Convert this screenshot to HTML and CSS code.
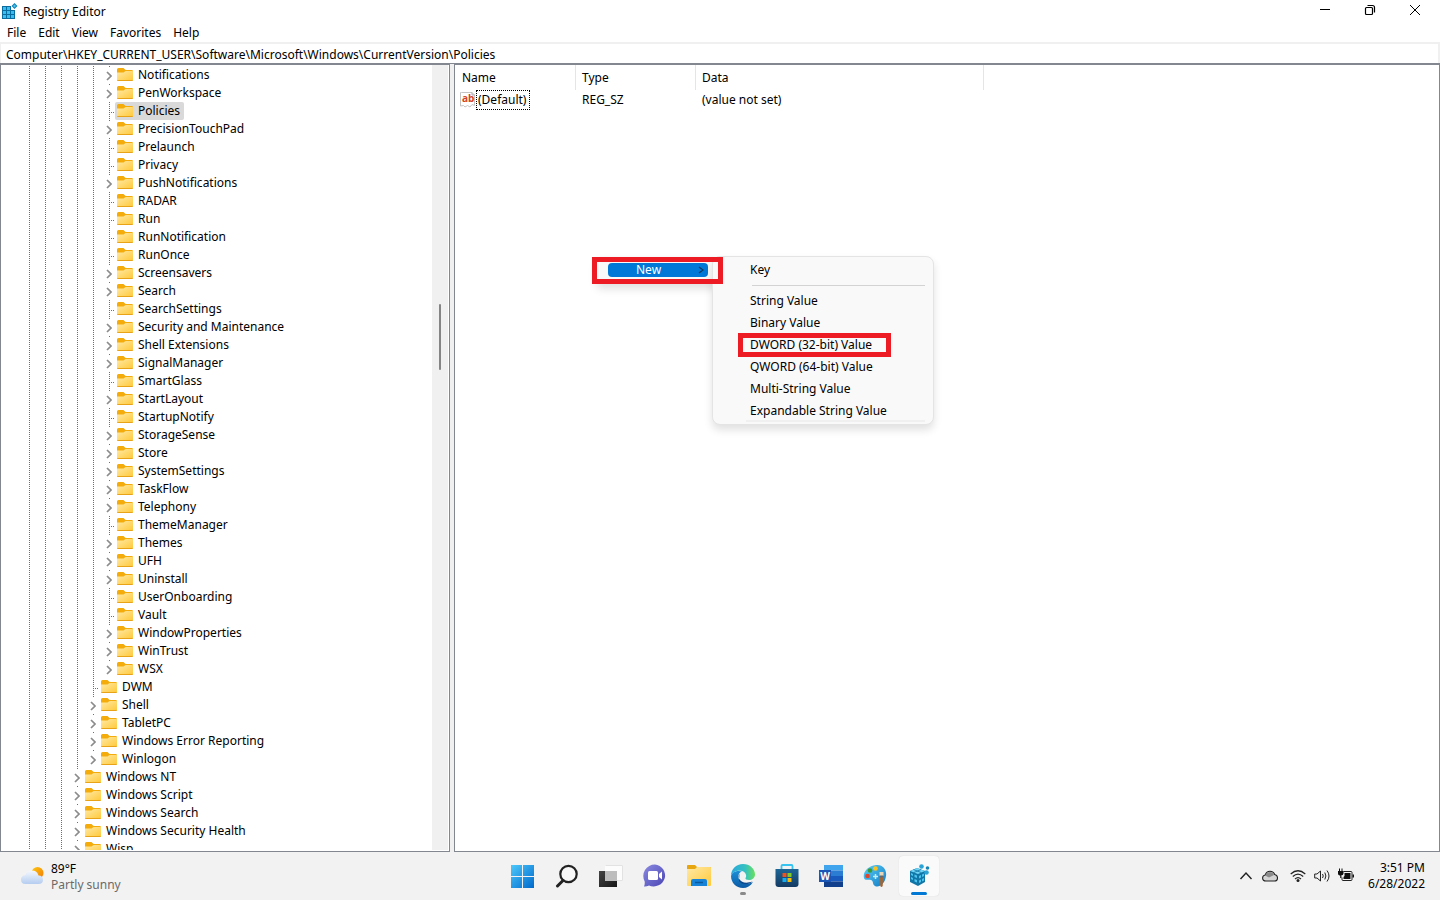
FILE: index.html
```html
<!DOCTYPE html>
<html lang="en">
<head>
<meta charset="utf-8">
<title>Registry Editor</title>
<link rel="stylesheet" href="styles.css">
</head>
<body>
<svg class="defs" aria-hidden="true">
  <defs>
    <linearGradient id="gFolder" x1="0" y1="0" x2="1" y2="1"><stop offset="0" stop-color="#ffe9a6"/><stop offset="1" stop-color="#ffca3a"/></linearGradient>
    <linearGradient id="gWin" x1="0" y1="0" x2="1" y2="1"><stop offset="0" stop-color="#4cc8fb"/><stop offset="1" stop-color="#0069cc"/></linearGradient>
    <linearGradient id="gDark" x1="0" y1="0" x2="1" y2="1"><stop offset="0" stop-color="#444"/><stop offset="1" stop-color="#161616"/></linearGradient>
    <linearGradient id="gChat" x1="0" y1="0" x2="1" y2="1"><stop offset="0" stop-color="#8a8ae0"/><stop offset="1" stop-color="#4b46b5"/></linearGradient>
    <linearGradient id="gEdge" x1="0" y1="0" x2="1" y2="0"><stop offset="0" stop-color="#2aa7dc"/><stop offset="0.6" stop-color="#35c1c0"/><stop offset="1" stop-color="#6be05c"/></linearGradient>
    <linearGradient id="gEdge2" x1="0" y1="0" x2="0" y2="1"><stop offset="0" stop-color="#1a8fd8"/><stop offset="1" stop-color="#0c59a4"/></linearGradient>
    <linearGradient id="gStore" x1="0" y1="0" x2="0" y2="1"><stop offset="0" stop-color="#1d6696"/><stop offset="1" stop-color="#143a63"/></linearGradient>
    <linearGradient id="gCloud" x1="0" y1="0" x2="0" y2="1"><stop offset="0" stop-color="#f4f8fe"/><stop offset="1" stop-color="#b5cdf0"/></linearGradient>
    <linearGradient id="gSun" x1="0" y1="0" x2="1" y2="1"><stop offset="0" stop-color="#ffc90e"/><stop offset="1" stop-color="#f07808"/></linearGradient>
    <linearGradient id="gPaint" x1="0" y1="0" x2="1" y2="1"><stop offset="0" stop-color="#5ad0f5"/><stop offset="1" stop-color="#1279c4"/></linearGradient>
    <symbol id="folder" viewBox="0 0 16 13">
      <path d="M0 1.500Q0 0 1.500 0H6.500L8.500 2H14.500Q16 2 16 3V6H0Z" fill="#f3ac0c"/>
      <path d="M0 4.500H6.500L8.500 3H15.500L16 3.500V12Q16 12.500 15 12.500H1Q0 12.500 0 12Z" fill="url(#gFolder)"/>
      <path d="M0 12H16Q16 13 15 13H1Q0 13 0 12Z" fill="#e8a317"/>
    </symbol>
    <symbol id="chev" viewBox="0 0 6 10"><path d="M1 1L5 5L1 9" fill="none" stroke="#8b8b8b" stroke-width="1.700"/></symbol>
  </defs>
</svg>

<main class="window">
  <header class="titlebar">
    <svg class="app-icon" viewBox="0 0 16 16"><rect x="0" y="3" width="13" height="13" fill="#0b6c9f"/><path d="M1 4H4V7H1ZM5 4H8V7H5ZM1 8H4V11H1ZM5 8H8V11H5ZM9 8H12V11H9ZM1 12H4V15H1ZM5 12H8V15H5ZM9 12H12V15H9Z" fill="#37bdf0"/><path d="M9 3H13V7H9Z" fill="#fff"/><path d="M12.500 0L15.500 3L12.500 6L9.500 3Z" fill="#1583b8"/><path d="M12.500 1.500L14 3L12.500 4.500L11 3Z" fill="#49c4ef"/></svg>
    <h1 class="title">Registry Editor</h1>
    <div class="controls">
      <button type="button" aria-label="Minimize"><svg viewBox="0 0 12 12"><path d="M1 5.500H11" stroke="#000" fill="none"/></svg></button>
      <button type="button" aria-label="Restore"><svg viewBox="0 0 12 12"><rect x="1.500" y="3.500" width="7" height="7" rx="1" stroke="#000" stroke-width="1.200" fill="none"/><path d="M3.500 1.500H8.500Q10.500 1.500 10.500 3.500V8.500" stroke="#000" stroke-width="1.200" fill="none"/></svg></button>
      <button type="button" aria-label="Close"><svg viewBox="0 0 12 12"><path d="M1 1L11 11M11 1L1 11" stroke="#000" fill="none"/></svg></button>
    </div>
  </header>
  <nav class="menubar" aria-label="Menu">
    <button type="button">File</button><button type="button">Edit</button><button type="button">View</button><button type="button">Favorites</button><button type="button">Help</button>
  </nav>
  <div class="address"><input type="text" aria-label="Address" value="Computer\HKEY_CURRENT_USER\Software\Microsoft\Windows\CurrentVersion\Policies"></div>

  <div class="panes">
    <section class="tree-pane" aria-label="Keys">
      <ul class="tree">
        <li class="row"><i class="guides"></i><button type="button" class="tog" aria-label="Expand"><svg><use href="#chev"/></svg></button><span class="key"><svg><use href="#folder"/></svg>Notifications</span></li>
        <li class="row"><i class="guides"></i><button type="button" class="tog" aria-label="Expand"><svg><use href="#chev"/></svg></button><span class="key"><svg><use href="#folder"/></svg>PenWorkspace</span></li>
        <li class="row"><i class="guides"></i><i class="leaf"></i><span class="key selected"><svg><use href="#folder"/></svg>Policies</span></li>
        <li class="row"><i class="guides"></i><button type="button" class="tog" aria-label="Expand"><svg><use href="#chev"/></svg></button><span class="key"><svg><use href="#folder"/></svg>PrecisionTouchPad</span></li>
        <li class="row"><i class="guides"></i><i class="leaf"></i><span class="key"><svg><use href="#folder"/></svg>Prelaunch</span></li>
        <li class="row"><i class="guides"></i><i class="leaf"></i><span class="key"><svg><use href="#folder"/></svg>Privacy</span></li>
        <li class="row"><i class="guides"></i><button type="button" class="tog" aria-label="Expand"><svg><use href="#chev"/></svg></button><span class="key"><svg><use href="#folder"/></svg>PushNotifications</span></li>
        <li class="row"><i class="guides"></i><i class="leaf"></i><span class="key"><svg><use href="#folder"/></svg>RADAR</span></li>
        <li class="row"><i class="guides"></i><i class="leaf"></i><span class="key"><svg><use href="#folder"/></svg>Run</span></li>
        <li class="row"><i class="guides"></i><i class="leaf"></i><span class="key"><svg><use href="#folder"/></svg>RunNotification</span></li>
        <li class="row"><i class="guides"></i><i class="leaf"></i><span class="key"><svg><use href="#folder"/></svg>RunOnce</span></li>
        <li class="row"><i class="guides"></i><button type="button" class="tog" aria-label="Expand"><svg><use href="#chev"/></svg></button><span class="key"><svg><use href="#folder"/></svg>Screensavers</span></li>
        <li class="row"><i class="guides"></i><button type="button" class="tog" aria-label="Expand"><svg><use href="#chev"/></svg></button><span class="key"><svg><use href="#folder"/></svg>Search</span></li>
        <li class="row"><i class="guides"></i><i class="leaf"></i><span class="key"><svg><use href="#folder"/></svg>SearchSettings</span></li>
        <li class="row"><i class="guides"></i><button type="button" class="tog" aria-label="Expand"><svg><use href="#chev"/></svg></button><span class="key"><svg><use href="#folder"/></svg>Security and Maintenance</span></li>
        <li class="row"><i class="guides"></i><button type="button" class="tog" aria-label="Expand"><svg><use href="#chev"/></svg></button><span class="key"><svg><use href="#folder"/></svg>Shell Extensions</span></li>
        <li class="row"><i class="guides"></i><button type="button" class="tog" aria-label="Expand"><svg><use href="#chev"/></svg></button><span class="key"><svg><use href="#folder"/></svg>SignalManager</span></li>
        <li class="row"><i class="guides"></i><i class="leaf"></i><span class="key"><svg><use href="#folder"/></svg>SmartGlass</span></li>
        <li class="row"><i class="guides"></i><button type="button" class="tog" aria-label="Expand"><svg><use href="#chev"/></svg></button><span class="key"><svg><use href="#folder"/></svg>StartLayout</span></li>
        <li class="row"><i class="guides"></i><i class="leaf"></i><span class="key"><svg><use href="#folder"/></svg>StartupNotify</span></li>
        <li class="row"><i class="guides"></i><button type="button" class="tog" aria-label="Expand"><svg><use href="#chev"/></svg></button><span class="key"><svg><use href="#folder"/></svg>StorageSense</span></li>
        <li class="row"><i class="guides"></i><button type="button" class="tog" aria-label="Expand"><svg><use href="#chev"/></svg></button><span class="key"><svg><use href="#folder"/></svg>Store</span></li>
        <li class="row"><i class="guides"></i><button type="button" class="tog" aria-label="Expand"><svg><use href="#chev"/></svg></button><span class="key"><svg><use href="#folder"/></svg>SystemSettings</span></li>
        <li class="row"><i class="guides"></i><button type="button" class="tog" aria-label="Expand"><svg><use href="#chev"/></svg></button><span class="key"><svg><use href="#folder"/></svg>TaskFlow</span></li>
        <li class="row"><i class="guides"></i><button type="button" class="tog" aria-label="Expand"><svg><use href="#chev"/></svg></button><span class="key"><svg><use href="#folder"/></svg>Telephony</span></li>
        <li class="row"><i class="guides"></i><i class="leaf"></i><span class="key"><svg><use href="#folder"/></svg>ThemeManager</span></li>
        <li class="row"><i class="guides"></i><button type="button" class="tog" aria-label="Expand"><svg><use href="#chev"/></svg></button><span class="key"><svg><use href="#folder"/></svg>Themes</span></li>
        <li class="row"><i class="guides"></i><button type="button" class="tog" aria-label="Expand"><svg><use href="#chev"/></svg></button><span class="key"><svg><use href="#folder"/></svg>UFH</span></li>
        <li class="row"><i class="guides"></i><button type="button" class="tog" aria-label="Expand"><svg><use href="#chev"/></svg></button><span class="key"><svg><use href="#folder"/></svg>Uninstall</span></li>
        <li class="row"><i class="guides"></i><i class="leaf"></i><span class="key"><svg><use href="#folder"/></svg>UserOnboarding</span></li>
        <li class="row"><i class="guides"></i><i class="leaf"></i><span class="key"><svg><use href="#folder"/></svg>Vault</span></li>
        <li class="row"><i class="guides"></i><button type="button" class="tog" aria-label="Expand"><svg><use href="#chev"/></svg></button><span class="key"><svg><use href="#folder"/></svg>WindowProperties</span></li>
        <li class="row"><i class="guides"></i><button type="button" class="tog" aria-label="Expand"><svg><use href="#chev"/></svg></button><span class="key"><svg><use href="#folder"/></svg>WinTrust</span></li>
        <li class="row"><i class="guides"></i><button type="button" class="tog" aria-label="Expand"><svg><use href="#chev"/></svg></button><span class="key"><svg><use href="#folder"/></svg>WSX</span></li>
        <li class="row level-4"><i class="guides"></i><i class="leaf"></i><span class="key"><svg><use href="#folder"/></svg>DWM</span></li>
        <li class="row level-4"><i class="guides"></i><button type="button" class="tog" aria-label="Expand"><svg><use href="#chev"/></svg></button><span class="key"><svg><use href="#folder"/></svg>Shell</span></li>
        <li class="row level-4"><i class="guides"></i><button type="button" class="tog" aria-label="Expand"><svg><use href="#chev"/></svg></button><span class="key"><svg><use href="#folder"/></svg>TabletPC</span></li>
        <li class="row level-4"><i class="guides"></i><button type="button" class="tog" aria-label="Expand"><svg><use href="#chev"/></svg></button><span class="key"><svg><use href="#folder"/></svg>Windows Error Reporting</span></li>
        <li class="row level-4"><i class="guides"></i><button type="button" class="tog" aria-label="Expand"><svg><use href="#chev"/></svg></button><span class="key"><svg><use href="#folder"/></svg>Winlogon</span></li>
        <li class="row level-3"><i class="guides"></i><button type="button" class="tog" aria-label="Expand"><svg><use href="#chev"/></svg></button><span class="key"><svg><use href="#folder"/></svg>Windows NT</span></li>
        <li class="row level-3"><i class="guides"></i><button type="button" class="tog" aria-label="Expand"><svg><use href="#chev"/></svg></button><span class="key"><svg><use href="#folder"/></svg>Windows Script</span></li>
        <li class="row level-3"><i class="guides"></i><button type="button" class="tog" aria-label="Expand"><svg><use href="#chev"/></svg></button><span class="key"><svg><use href="#folder"/></svg>Windows Search</span></li>
        <li class="row level-3"><i class="guides"></i><button type="button" class="tog" aria-label="Expand"><svg><use href="#chev"/></svg></button><span class="key"><svg><use href="#folder"/></svg>Windows Security Health</span></li>
        <li class="row level-3"><i class="guides"></i><button type="button" class="tog" aria-label="Expand"><svg><use href="#chev"/></svg></button><span class="key"><svg><use href="#folder"/></svg>Wisp</span></li>
      </ul>
      <div class="scrollbar"><div class="thumb"></div></div>
    </section>

    <section class="value-pane" aria-label="Values">
      <table class="values">
        <thead><tr><th class="c-name">Name</th><th class="c-type">Type</th><th class="c-data">Data</th><th class="c-rest"></th></tr></thead>
        <tbody><tr><td><span class="value-name"><svg viewBox="0 0 16 16"><path d="M1.500 .5H12L14.500 3V13.500L12 12.500L10 15L7.500 13.500L5 15L3.500 13.500L.5 14V.5Z" fill="#fff" stroke="#c4c4c4"/><path d="M12 .5V3H14.500" fill="none" stroke="#a9a9a9"/><text x="2" y="10" class="ab">ab</text></svg><span class="focus">(Default)</span></span></td><td>REG_SZ</td><td>(value not set)</td><td></td></tr></tbody>
      </table>
      <div class="context">
        <div class="parent-menu"><button type="button" class="new">New<svg viewBox="0 0 6 8"><path d="M1 1L5 4L1 7" fill="none" stroke="#12375c" stroke-width="1.200"/></svg></button></div>
        <div class="submenu">
          <button type="button">Key</button>
          <hr>
          <button type="button">String Value</button>
          <button type="button">Binary Value</button>
          <button type="button" class="marked">DWORD (32-bit) Value</button>
          <button type="button">QWORD (64-bit) Value</button>
          <button type="button">Multi-String Value</button>
          <button type="button" class="last">Expandable String Value</button>
        </div>
        <div class="mark-new"></div>
      </div>
    </section>
  </div>
</main>

<footer class="taskbar">
  <button type="button" class="weather">
    <svg viewBox="0 0 24 20"><circle cx="17.500" cy="6" r="6" fill="url(#gSun)"/><path d="M5.500 17Q1 17 1 12.500Q1 8.500 5.500 8Q7 3.500 12 3.500Q17 3.500 18.500 8.500Q23 8.500 23 13Q23 17 18.500 17Z" fill="url(#gCloud)"/></svg>
    <span class="weather-text"><span>89°F</span><span class="muted">Partly sunny</span></span>
  </button>
  <nav class="apps" aria-label="Apps">
    <button type="button" aria-label="Start"><svg viewBox="0 0 24 24"><path d="M0 1H11V12H0ZM12 1H23V12H12ZM0 13H11V24H0ZM12 13H23V24H12Z" fill="url(#gWin)"/></svg></button>
    <button type="button" aria-label="Search"><svg viewBox="0 0 24 24"><circle cx="13.500" cy="10" r="8.200" fill="#f8f8f8" stroke="#222" stroke-width="2.200"/><path d="M8 16.500L2.500 22" stroke="#222" stroke-width="3" stroke-linecap="round"/></svg></button>
    <button type="button" aria-label="Task View"><svg viewBox="0 0 24 24"><path d="M6 1H24V17H6Z" fill="#fcfcfc"/><path d="M0 7H18V23H0Z" fill="url(#gDark)"/><path d="M6 7H18V17H6Z" fill="#bdbdbd"/><path d="M6.500 1.500H23.500V16.500H18" fill="none" stroke="#e2e2e2"/></svg></button>
    <button type="button" aria-label="Chat"><svg viewBox="0 0 24 24"><path d="M12 .5A11.500 11 0 1 1 6 21.500Q3.500 22.700 1 22.500Q2 20.500 1.700 17.500A11.500 11.500 0 0 1 12 .5Z" fill="url(#gChat)"/><rect x="5" y="7" width="10" height="9" rx="1.500" fill="#fff"/><path d="M16 10L19 7.500V15.500L16 13Z" fill="#fff"/></svg></button>
    <button type="button" aria-label="File Explorer"><svg viewBox="0 0 24 24"><path d="M0 2Q0 1 1 1H8L10 3H23Q24 3 24 4V10H0Z" fill="#e7a50f"/><path d="M0 5H8L10 3H23Q24 3 24 4V21Q24 22 23 22H1Q0 22 0 21Z" fill="url(#gFolder)"/><path d="M4 22V17Q4 15 6 15H18Q20 15 20 17V22Z" fill="#1683d8"/><path d="M8 18.500H16" stroke="#0a589c" stroke-width="1.500"/></svg></button>
    <button type="button" aria-label="Edge" class="running"><svg viewBox="0 0 24 24"><path d="M0 12C0 5 5 0 12 0C19 0 24 5 24 10.500C24 14 21 16 18 16C15.500 16 14 15 14.500 14C16 12 15 8 11 7C6 6 1 8 0 12Z" fill="url(#gEdge)"/><path d="M0 12C1 7.500 7 6 11 7.500C8.500 8 7 10.500 7.500 13.500C8.500 19 15 21.500 22 18C19.500 22 16 24 12 24C5 24 0 18.500 0 12Z" fill="url(#gEdge2)"/><path d="M8.500 9.500C6 14 10 21.500 21.500 17.500C17 21.500 11 21 8 17Z" fill="#0b4a8e"/></svg></button>
    <button type="button" aria-label="Microsoft Store"><svg viewBox="0 0 24 24"><path d="M6.500 6V2Q6.500 1 7.500 1H16.500Q17.500 1 17.500 2V6" fill="none" stroke="#36c3ef" stroke-width="1.800"/><path d="M.5 5H23.500V20Q23.500 23 20.500 23H3.500Q.5 23 .5 20Z" fill="url(#gStore)"/><path d="M7.500 9H11.500V13H7.500Z" fill="#f1511b"/><path d="M12.500 9H16.500V13H12.500Z" fill="#80cc28"/><path d="M7.500 14H11.500V18H7.500Z" fill="#15adef"/><path d="M12.500 14H16.500V18H12.500Z" fill="#fbbc09"/></svg></button>
    <button type="button" aria-label="Word"><svg viewBox="0 0 24 24"><path d="M5 1H24V6.500H5Z" fill="#41a5ee"/><path d="M5 6.500H24V12H5Z" fill="#2b7cd3"/><path d="M5 12H24V17.500H5Z" fill="#185abd"/><path d="M5 17.500H24V23H5Z" fill="#123f8b"/><path d="M0 6H12V18H0Z" fill="#1a56b5"/><text x="6" y="16" class="word">W</text></svg></button>
    <button type="button" aria-label="Paint"><svg viewBox="0 0 24 24"><path d="M13 1C20 0 24 6 23 12C22 20 16 24 12 22C9 20.500 11 17 8 16C5 15 2 17 1 14C-.5 8 5 2 13 1Z" fill="url(#gPaint)"/><circle cx="4.500" cy="12" r="2.300" fill="#e0452b"/><circle cx="7" cy="6.500" r="2.300" fill="#3a9a35"/><circle cx="12.500" cy="4.500" r="2.300" fill="#ffc21c"/><path d="M12.500 10V15M10 12.500H15" stroke="#bfeeff" stroke-width="1.500"/><path d="M17 13H20L19.700 22Q18.500 24 17.300 22Z" fill="#a9642d"/><path d="M16.500 8H20.500V12H16.500Z" fill="#e8d5b8"/><path d="M16.500 11.500H20.500V13.500H16.500Z" fill="#5f6b74"/></svg></button>
    <button type="button" aria-label="Registry Editor" class="running active"><svg viewBox="0 0 24 24"><path d="M3 7L10 4L18 7V18L11 22L3 18Z" fill="#1176a6"/><path d="M3 7L10 4L18 7L11 10Z" fill="#6fd3f4"/><path d="M4 9L6 10V12L4 11ZM7.500 10.500L10 11.500V14L7.500 13ZM4 13L6 14V16L4 15ZM7.500 15L10 16V18.500L7.500 17.500ZM12 12L14 11V13.500L12 14.500ZM15 10.500L17 9.500V12L15 13ZM12 16.500L14 15.500V18L12 19ZM15 15L17 14V16.500L15 17.500Z" fill="#4cc3ee"/><path d="M6.500 5.500L14.500 8.700M14 5.500L6.500 8.700" stroke="#1176a6" stroke-width=".8"/><circle cx="14.500" cy="2.500" r="2.300" fill="#2aa3d6"/><circle cx="20.500" cy="4" r="1.800" fill="#1684b4"/><circle cx="19.500" cy="8.500" r="2.300" fill="#2aa3d6"/></svg></button>
  </nav>
  <div class="tray">
    <button type="button" aria-label="Show hidden icons"><svg viewBox="0 0 16 16"><path d="M2.500 11L8 5L13.500 11" fill="none" stroke="#222" stroke-width="1.400"/></svg></button>
    <button type="button" aria-label="OneDrive" class="cloud"><svg viewBox="0 0 16 16"><path d="M4 13Q.6 13 .6 10Q.6 7.500 3.200 7Q4.500 3.200 8 3.200Q11.500 3.200 12.700 6.500Q15.500 7 15.500 9.800Q15.500 13 12.500 13Z" fill="#d4d4d4" stroke="#222" stroke-width="1.100"/><path d="M3 7.500Q5 4 8 4Q11 4 12 7L7 9.500Z" fill="#8a8a8a"/></svg></button>
    <button type="button" aria-label="Wi-Fi"><svg viewBox="0 0 16 16"><path d="M.7 6Q8-.5 15.300 6M2.800 8.500Q8 3.700 13.200 8.500M5 11Q8 8.300 11 11" fill="none" stroke="#222" stroke-width="1.200"/><circle cx="8" cy="12.500" r="1.500" fill="#222"/></svg></button>
    <button type="button" aria-label="Volume"><svg viewBox="0 0 16 16"><path d="M.7 6H3L6.500 3V13L3 10H.7Z" fill="none" stroke="#222"/><path d="M8.500 6Q10 8 8.500 10M10.800 4.500Q13 8 10.800 11.500M13 2.500Q17 8 13 13.500" fill="none" stroke="#222"/></svg></button>
    <button type="button" aria-label="Battery"><svg viewBox="0 0 16 16"><path d="M5.500 3.500H13Q14 3.500 14 4.500V11.500Q14 12.500 13 12.500H5Q4 12.500 4 11.500V9.500" fill="none" stroke="#222"/><path d="M6 5H12.500V11H5.500V9Q7 8 6.500 5Z" fill="#111"/><path d="M14.500 6.500H16V9.500H14.500Z" fill="#111"/><path d="M0 3H5.500V5.500Q5.500 7.500 2.800 7.500Q0 7.500 0 5.500ZM1 .5H2V3H1ZM3.500 .5H4.500V3H3.500ZM2.200 7H3.400V10H2.200Z" fill="#111"/></svg></button>
    <button type="button" class="clock"><span>3:51 PM</span><span>6/28/2022</span></button>
  </div>
</footer>
</body>
</html>
```

FILE: styles.css
```css
* { box-sizing: border-box; }

body {
  margin: 0;
  height: 100vh;
  display: flex;
  flex-direction: column;
  overflow: hidden;
  background: #f2f2f2;
  color: #000;
  font: 12px/18px "Noto Sans", "Open Sans", sans-serif;
}

button {
  margin: 0;
  padding: 0;
  border: 0;
  background: none;
  color: inherit;
  font: inherit;
  white-space: nowrap;
}

svg { display: block; flex: none; }
.defs { position: absolute; width: 0; height: 0; }

.window { flex: 1; min-height: 0; display: flex; flex-direction: column; background: #fff; }

.titlebar { display: flex; align-items: flex-start; height: 24px; padding-left: 2px; }
.app-icon { width: 16px; height: 16px; margin-top: 3px; }
.title { margin: 3px auto 0 5px; font-size: 12px; line-height: 18px; font-weight: 400; }
.controls { display: flex; height: 20px; padding-right: 3px; }
.controls button { width: 45px; display: grid; place-items: center; }
.controls svg { width: 12px; height: 12px; }

.menubar { display: flex; gap: 12px; height: 18px; padding-left: 7px; }

.address { border: solid #f0f0f0; border-width: 2px 2px 0 1px; height: 21px; }
.address input {
  display: block;
  width: 100%;
  height: 19px;
  margin: 0;
  padding: 1px 5px 0;
  border: 0;
  outline: 0;
  background: #fff;
  color: #000;
  font: inherit;
}

.panes { flex: 1; min-height: 0; display: flex; gap: 4px; border-top: 1px solid #828790; background: #f0f0f0; }
.tree-pane, .value-pane { border: 1px solid #828790; background: #fff; }

.tree-pane { width: 450px; display: flex; padding: 0 1px 1px 0; overflow: hidden; }
.tree { flex: 1; margin: 0; padding: 1px 0 0 20px; list-style: none; overflow: hidden; }
.row { display: flex; height: 18px; }
.guides, .leaf, .tog { background-color: #fff; }
.guides {
  width: 80px;
  background-image: linear-gradient(transparent 50%, #fff 50%), linear-gradient(90deg, transparent 8px, #6e6e6e 8px, #6e6e6e 9px, transparent 9px);
  background-size: 16px 2px;
}
.level-4 .guides { width: 64px; }
.level-3 .guides { width: 48px; }
.leaf {
  width: 14px;
  background-image: repeating-linear-gradient(#6e6e6e 0 1px, transparent 1px 2px), repeating-linear-gradient(90deg, #6e6e6e 0 1px, transparent 1px 2px);
  background-size: 1px 18px, 6px 1px;
  background-position: 8px 0, 8px 10px;
  background-repeat: no-repeat;
}
.tog {
  width: 14px;
  padding: 2px 0 0 5px;
  background-image: linear-gradient(#6e6e6e, #6e6e6e);
  background-size: 1px 1px;
  background-position: 8px 0;
  background-repeat: no-repeat;
}
.tog svg { width: 6px; height: 10px; }
.key { display: flex; gap: 5px; padding: 0 4px 0 2px; border-radius: 2px; white-space: nowrap; }
.key svg { width: 16px; height: 13px; margin-top: 2px; }
.selected { background: #d9d9d9; }

.scrollbar { width: 16px; background: #f0f0f0; padding: 239px 7px 0; }
.thumb { height: 66px; background: #858585; border-radius: 1px; }

.value-pane { flex: 1; position: relative; }
.values { width: 100%; table-layout: fixed; border-collapse: separate; border-spacing: 0; }
.values th { height: 25px; padding: 1px 0 0 6px; border-right: 1px solid #e5e5e5; text-align: left; font-weight: 400; }
.values td { height: 20px; padding: 0 0 0 6px; }
.values th:last-child { border-right: 0; }
.values th:first-child { padding-left: 7px; }
.values td:first-child { padding-left: 5px; }
.c-name { width: 121px; }
.c-type { width: 120px; }
.c-data { width: 288px; }
.value-name { display: flex; align-items: center; }
.value-name > svg { width: 16px; height: 16px; }
.ab { font: 700 10px "Open Sans", sans-serif; fill: #d8431f; }
.focus { padding: 0 3px 0 1px; border: 1px dotted #000; }

.context { position: absolute; left: 137px; top: 191px; width: 342px; height: 168px; }
.parent-menu {
  position: absolute;
  left: 4px;
  top: 0;
  width: 122px;
  height: 28px;
  padding: 7px 6px 0 12px;
  border-radius: 6px;
  background: #f9f9f9;
  box-shadow: 0 5px 9px rgba(0, 0, 0, 0.12);
}
.new {
  width: 100px;
  height: 14px;
  display: flex;
  align-items: center;
  justify-content: space-between;
  padding: 0 4px 0 28px;
  border-radius: 4px;
  background: #0078d7;
  color: #fff;
  line-height: 14px;
}
.new svg { width: 6px; height: 8px; }
.submenu {
  position: absolute;
  left: 120px;
  top: 0;
  width: 222px;
  display: flex;
  flex-direction: column;
  padding: 2px 8px 2px 25px;
  border: 1px solid #e4e4e4;
  border-radius: 8px;
  background: #f9f9f9;
  box-shadow: 0 5px 9px rgba(0, 0, 0, 0.12);
}
.submenu button { height: 22px; padding-left: 12px; text-align: left; }
.submenu hr { width: 173px; margin: 4px 0; margin-left: auto; border: 0; border-top: 1px solid #d3d3d3; }
.submenu .marked { width: 153px; height: 24px; margin: -1px 0; padding-left: 7px; border: 5px solid #ed1c24; line-height: 14px; }
.submenu .last { margin-left: 8px; padding-left: 4px; background: linear-gradient(#f0f0f0, #f0f0f0) 0 100% / 100% 2px no-repeat; }
.mark-new { position: absolute; left: 0; top: 1px; width: 131px; height: 27px; border: 5px solid #ed1c24; }

.taskbar { display: grid; grid-template-columns: 1fr auto 1fr; height: 48px; background: #f2f2f2; }
.weather { display: flex; align-items: center; gap: 7px; padding: 2px 0 0 20px; text-align: left; justify-self: start; }
.weather svg { width: 24px; height: 20px; }
.weather-text, .clock { display: grid; line-height: 16px; }
.muted { color: #6a6a6a; }
.apps { display: flex; align-items: center; gap: 4px; padding-left: 2px; }
.apps button { position: relative; width: 40px; height: 40px; display: grid; place-items: center; border-radius: 4px; }
.apps svg { width: 24px; height: 24px; }
.word { font: 700 10px "Open Sans", sans-serif; fill: #fff; text-anchor: middle; }
.apps .active { background: #fafafa; box-shadow: 0 0 1px #ccc; }
.running::after { content: ""; position: absolute; left: 17px; bottom: 1px; width: 6px; height: 3px; border-radius: 2px; background: #8a8a8a; }
.active::after { left: 12px; width: 16px; background: #0078d4; }
.tray { justify-self: end; display: flex; align-items: center; gap: 8px; padding-right: 15px; }
.tray svg { width: 16px; height: 16px; }
.cloud { margin-right: 4px; }
.clock { margin-left: 6px; text-align: right; }
```
